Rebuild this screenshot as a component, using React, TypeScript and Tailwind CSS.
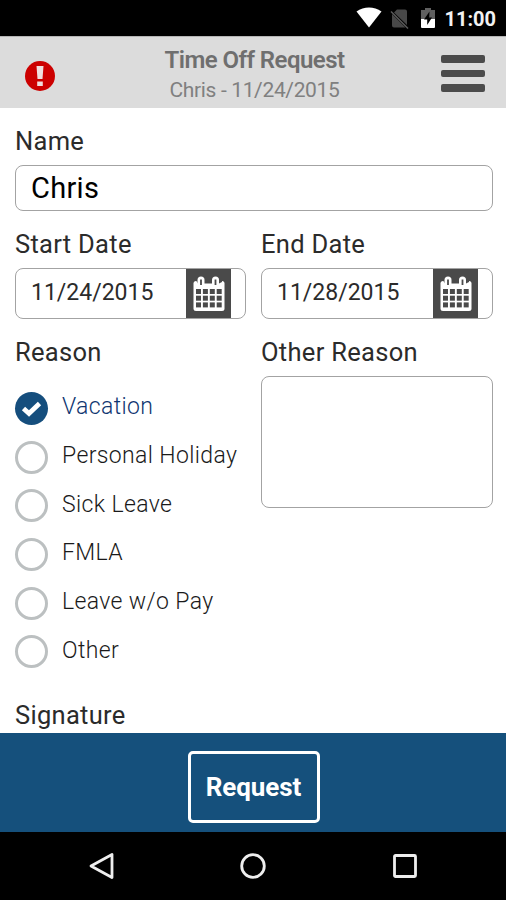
import { useState } from 'react';

const reasons = ['Vacation', 'Personal Holiday', 'Sick Leave', 'FMLA', 'Leave w/o Pay', 'Other'];

const labelClass = 'block h-7 text-[25.5px] leading-7 tracking-[0.3px] text-[#2b2b2b] whitespace-nowrap';

function StatusBar() {
  return (
    <div className="h-9 shrink-0 bg-black flex items-center justify-end pr-[10px]">
      <svg width="26" height="22" viewBox="0 0 26 22" className="mr-[8px] -mt-px">
        <path d="M0.5 4.5C8-1 18-1 25.5 4.5L13 20.5Z" fill="#fff" />
      </svg>
      <svg width="20" height="22" viewBox="0 0 20 22" className="mr-[10px] mt-px">
        <path d="M7 1.5H15Q17 1.5 17 3.5V17L4 4.5ZM2 6L15.500 19.500H4Q2 19.500 2 17.500Z" fill="#484848" />
        <path d="M1 3.500L18 20.500" stroke="#5c5c5c" strokeWidth="1.500" />
      </svg>
      <svg width="16" height="22" viewBox="0 0 16 22" className="mr-[8px]">
        <path d="M5 1H11V3H15V12H1V3H5Z" fill="#606060" />
        <path d="M1 12H15V20Q15 21 14 21H2Q1 21 1 20Z" fill="#fff" />
        <path d="M9.500 4.500L4 12.500H7.200V18L12 10.500H9.200Z" fill="#000" />
      </svg>
      <span className="text-[20px] leading-9 font-bold text-[#f2f2f2] pt-0.5">11:00</span>
    </div>
  );
}

function Header() {
  return (
    <header className="h-[72px] shrink-0 bg-[#dcdcdc] border-t border-[#b5b5b5] flex items-center justify-between pl-[25px] pr-[21px]">
      <svg width="30" height="30" viewBox="0 0 30 30" className="w-[46px] h-[30px] pr-4 mt-1.5">
        <circle cx="15" cy="15" r="15" fill="#cc0000" />
        <path d="M11.500 5H18.500L17.500 18H12.500ZM12.200 20.500H17.800V25H12.200Z" fill="#f0dede" />
      </svg>
      <div className="text-center text-[#6f6f6f] mt-[4px] -ml-[3px]">
        <h1 className="text-[24px] leading-[30px] font-semibold tracking-[-0.55px]">Time Off Request</h1>
        <p className="text-[21px] leading-[30px] tracking-[-0.35px] text-[#808080]">Chris - 11/24/2015</p>
      </div>
      <button className="w-[44px] flex flex-col gap-[7px] mt-[2px]">
        <span className="h-[7.7px] w-full rounded-[2px] bg-[#4b4b4b]" />
        <span className="h-[7.7px] w-full rounded-[2px] bg-[#4b4b4b]" />
        <span className="h-[7.7px] w-full rounded-[2px] bg-[#4b4b4b]" />
      </button>
    </header>
  );
}

function CalendarIcon() {
  const cols = [3, 9.9, 16.8, 23.7];
  const rows = [13, 19.7, 26.4];
  return (
    <svg width="32" height="36" viewBox="0 0 32 36">
      <rect x="0.500" y="5" width="31" height="30" rx="2.500" fill="#fff" />
      <path d="M3 4.500H29V6L26 7.500H5Z" fill="#4a4a4a" />
      <rect x="4.500" y="0.500" width="7" height="11" rx="3.500" fill="#fff" />
      <rect x="19" y="0.500" width="7" height="11" rx="3.500" fill="#fff" />
      <path d="M8 3.500V9M22.500 3.500V9" stroke="#4a4a4a" strokeWidth="1.800" />
      {rows.map((y) =>
        cols.map((x) => <rect key={`${x}-${y}`} x={x} y={y} width="5" height="5" fill="#4a4a4a" />)
      )}
    </svg>
  );
}

function DateField({ label, value }: { label: string; value: string }) {
  return (
    <div>
      <span className={labelClass}>{label}</span>
      <div className="mt-[10px] h-[51px] flex border-[1.5px] border-[#a3a3a3] rounded-lg overflow-hidden">
        <span className="flex-1 pl-[15px] text-[23px] leading-[47px] text-[#2b2b2b]">{value}</span>
        <button className="w-[45px] mr-[14px] bg-[#4a4a4a] flex items-center justify-center">
          <CalendarIcon />
        </button>
      </div>
    </div>
  );
}

function Radio({ checked }: { checked: boolean }) {
  if (!checked) {
    return <span className="w-[33px] h-[33px] rounded-full border-[3px] border-[#bcc0c1]" />;
  }
  return (
    <span className="w-[33px] h-[33px] rounded-full bg-[#154e7d] flex items-center justify-center">
      <svg width="21" height="17" viewBox="0 0 21 17">
        <path d="M2.500 8.500L8 13.500L18.500 3.500" fill="none" stroke="#fff" strokeWidth="4.800" />
      </svg>
    </span>
  );
}

export default function App() {
  const [reason, setReason] = useState('Vacation');

  return (
    <div className="w-[506px] h-[900px] flex flex-col overflow-hidden bg-white font-['Roboto',sans-serif]">
      <StatusBar />
      <Header />

      <main className="flex-1 min-h-0 overflow-hidden pl-[15px] pr-[13px] pt-[19px]">
        <span className={labelClass}>Name</span>
        <div className="mt-[10px] h-[46px] border-[1.5px] border-[#a3a3a3] rounded-lg pl-[15px] text-[29px] leading-[44px] tracking-[0.3px] text-black">
          Chris
        </div>

        <div className="grid grid-cols-[231px_232px] gap-x-[15px] mt-[19px]">
          <DateField label="Start Date" value="11/24/2015" />
          <DateField label="End Date" value="11/28/2015" />
        </div>

        <div className="grid grid-cols-[231px_232px] gap-x-[15px] mt-[19px]">
          <div>
            <span className={labelClass}>Reason</span>
            <div className="mt-[26px] flex flex-col gap-[15.7px]">
              {reasons.map((item) => (
                <button key={item} onClick={() => setReason(item)} className="h-[33px] flex items-center">
                  <Radio checked={item === reason} />
                  <span
                    className={`ml-[14px] -mt-[2px] text-[23px] tracking-[0.37px] font-light whitespace-nowrap ${
                      item === reason ? 'text-[#0f3570]' : 'text-[#1a1a1a]'
                    }`}
                  >
                    {item}
                  </span>
                </button>
              ))}
            </div>
          </div>
          <div>
            <span className={labelClass}>Other Reason</span>
            <div className="mt-[10px] h-[132px] border-[1.5px] border-[#a3a3a3] rounded-lg" />
          </div>
        </div>

        <span className={`${labelClass} mt-[33px]`}>Signature</span>
      </main>

      <footer className="h-[99px] shrink-0 bg-[#15507c] flex items-center justify-center">
        <button className="mt-2 ml-px w-[132px] h-[72px] border-[3px] border-white rounded-[5px] pt-px text-[26px] font-bold tracking-[-0.1px] text-white">
          Request
        </button>
      </footer>

      <nav className="h-[68px] shrink-0 bg-black flex items-center justify-between pl-[89px] pr-[88px]">
        <svg width="25" height="28" viewBox="0 0 25 28">
          <path d="M2 14L23 2.500V25.500Z" fill="none" stroke="#eee" strokeWidth="2.800" strokeLinejoin="round" />
        </svg>
        <svg width="26" height="26" viewBox="0 0 26 26">
          <circle cx="13" cy="13" r="11.300" fill="none" stroke="#eee" strokeWidth="2.800" />
        </svg>
        <svg width="26" height="26" viewBox="0 0 26 26">
          <rect x="2.500" y="2.500" width="21" height="21" rx="1" fill="none" stroke="#eee" strokeWidth="2.800" />
        </svg>
      </nav>
    </div>
  );
}
